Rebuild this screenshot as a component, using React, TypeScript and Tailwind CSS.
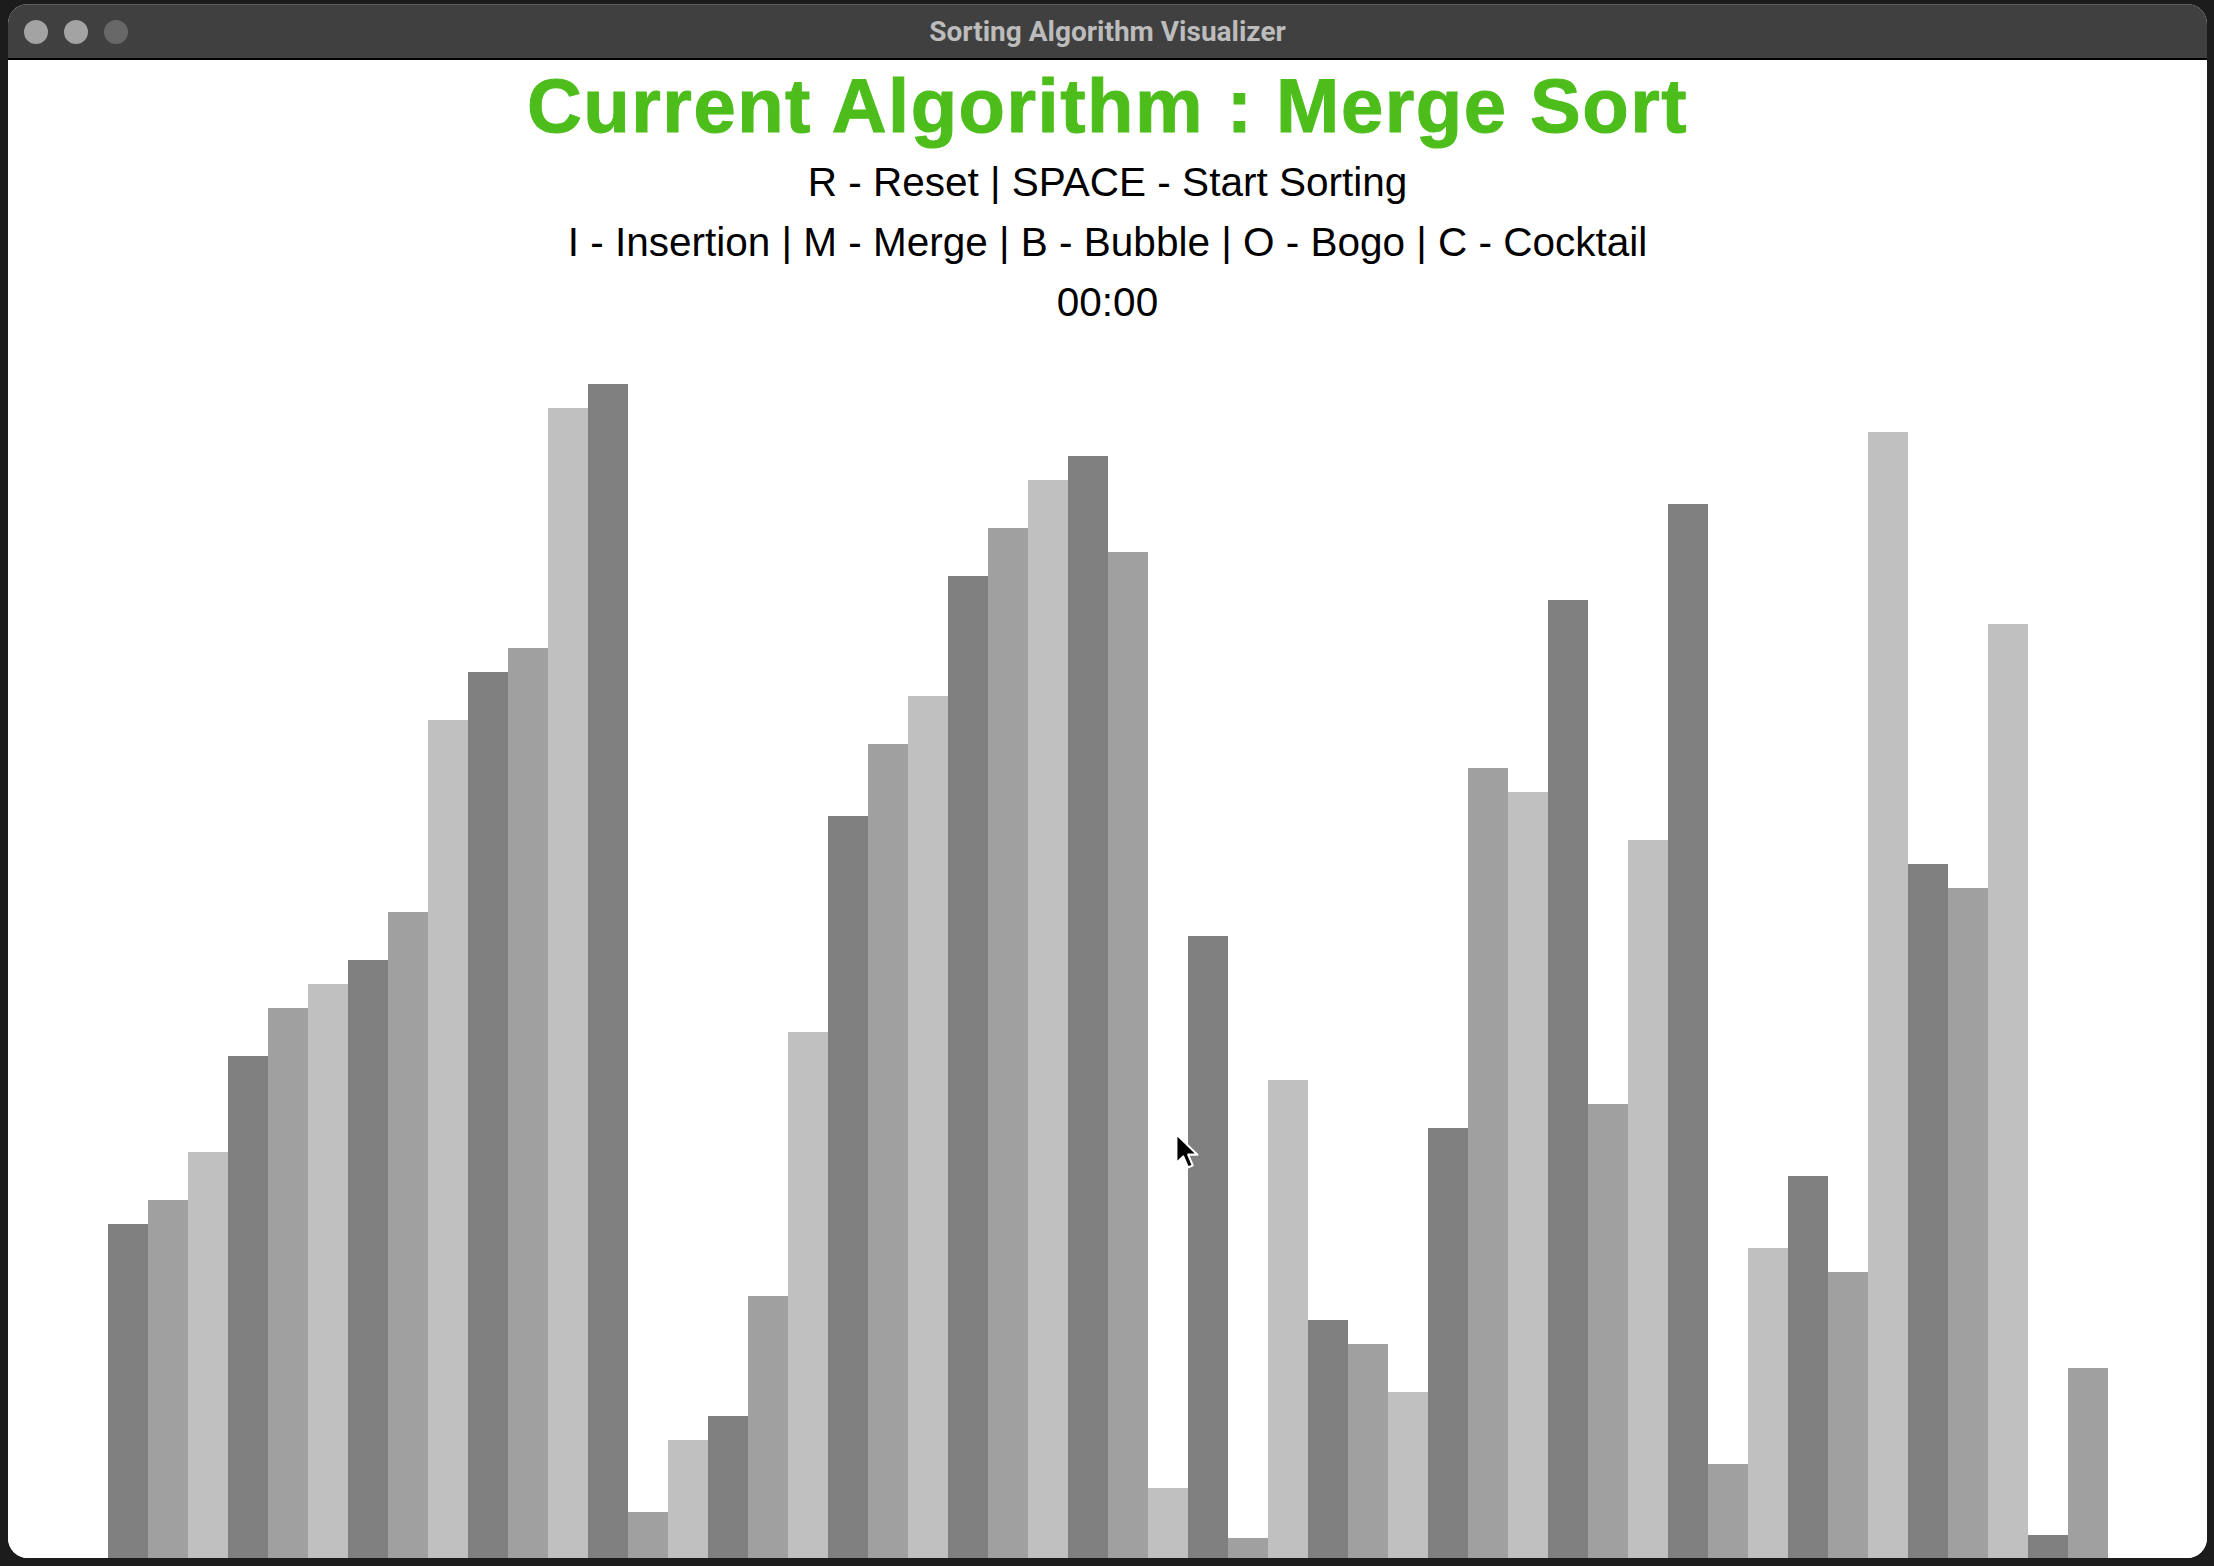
import React from 'react'

// bar values as they appear on screen (merge sort in progress)
const VALUES = [
  14, 15, 17, 21, 23, 24, 25, 27, 35, 37, 38, 48, 49,
  2, 5, 6, 11, 22, 31, 34, 36, 41, 43, 45, 46, 42,
  3, 26, 0, 20, 10, 9, 7, 18, 33, 32, 40, 19, 30, 44,
  4, 13, 16, 12, 47, 29, 28, 39, 1, 8,
]

const SHADES = ['bg-[#808080]', 'bg-[#a0a0a0]', 'bg-[#c0c0c0]']

function barHeight(v: number) {
  if (v === 0) return 20
  if (v === 1) return 23
  return v * 24 - 2
}

function TitleBar() {
  return (
    <div className="grid h-[56px] shrink-0 grid-cols-[1fr_auto_1fr] items-center border-t border-[#5c5c5c] border-b-2 border-b-black bg-[#404040]">
      <div className="flex items-center gap-[16px] pl-[16px]">
        <span className="h-[24px] w-[24px] rounded-full bg-[#a3a3a3]" />
        <span className="h-[24px] w-[24px] rounded-full bg-[#a3a3a3]" />
        <span className="h-[24px] w-[24px] rounded-full bg-[#686868]" />
      </div>
      <div className="text-[28px] font-bold text-[#bcbcbc] [font-family:Roboto,'Liberation_Sans',sans-serif]">
        Sorting Algorithm Visualizer
      </div>
      <div />
    </div>
  )
}

function Cursor() {
  return (
    <svg
      className="pointer-events-none absolute left-[1174px] top-[1132px]"
      width="27"
      height="38"
      viewBox="0 0 17 24"
    >
      <path
        d="M1.5 1.5 L1.5 19.5 L5.8 15.4 L8.8 22.4 L11.8 21.1 L8.9 14.3 L14.8 14.3 Z"
        fill="#000"
        stroke="#fff"
        strokeWidth="1.3"
        strokeLinejoin="round"
      />
    </svg>
  )
}

export default function App() {
  return (
    <div className="relative flex h-screen w-screen bg-[#1c1c1c] pt-[4px] pr-[7px] pb-[8px] pl-[8px] [font-family:'Liberation_Sans',Arial,sans-serif]">
      <div className="flex flex-1 flex-col overflow-hidden rounded-[20px] bg-white">
        <TitleBar />
        <div className="flex flex-1 flex-col bg-white">
          <div className="pt-[8px] text-center text-[76px] leading-[76px] font-bold tracking-[1.5px] text-[#4dbd1c] [-webkit-text-stroke:1px_#4dbd1c]">
            Current Algorithm : Merge Sort
          </div>
          <div className="mt-[8px] text-center text-[40.5px] leading-[60px] text-black">
            <div>R - Reset | SPACE - Start Sorting</div>
            <div>I - Insertion | M - Merge | B - Bubble | O - Bogo | C - Cocktail</div>
            <div>00:00</div>
          </div>
          <div className="flex flex-1 items-end px-[100px]">
            {VALUES.map((v, i) => (
              <div
                key={i}
                className={`w-[40px] shrink-0 ${SHADES[i % 3]}`}
                style={{ height: barHeight(v) }}
              />
            ))}
          </div>
        </div>
      </div>
      <Cursor />
    </div>
  )
}
